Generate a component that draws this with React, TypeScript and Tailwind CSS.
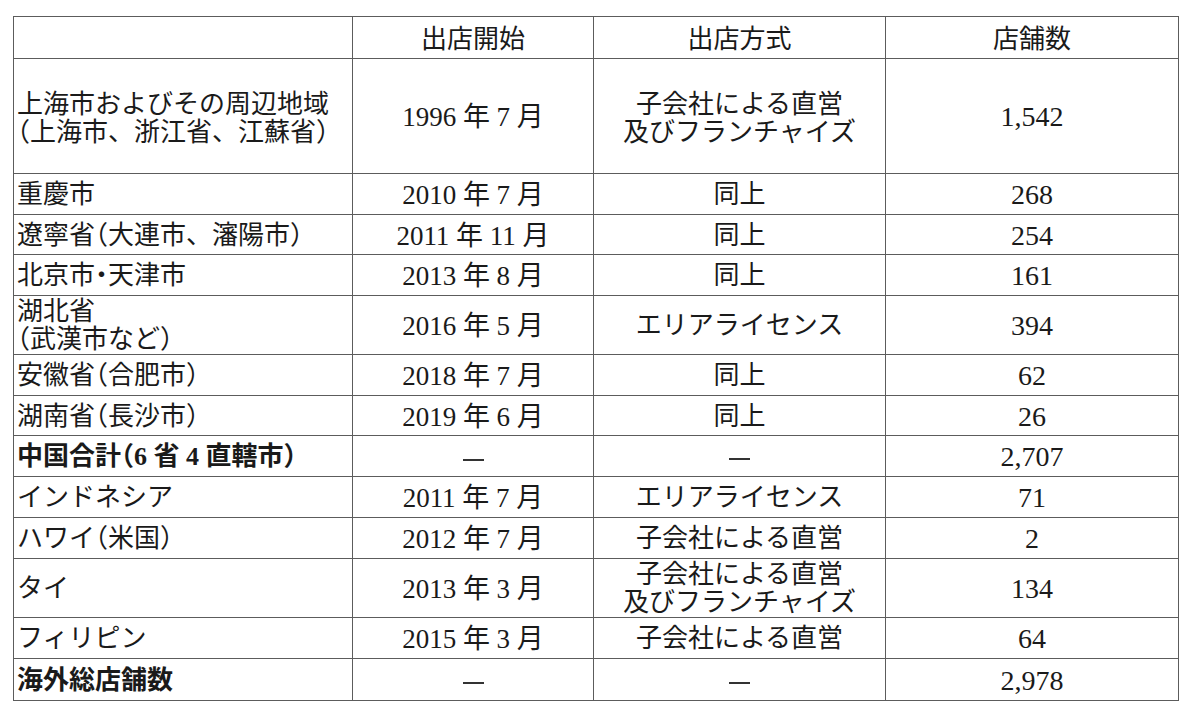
import React from "react";

type Row = {
  region: string[];
  date: string;
  method: string[];
  count: string;
  bold?: boolean;
  h: string;
};

const rows: Row[] = [
  { region: ["上海市およびその周辺地域", "（上海市、浙江省、江蘇省）"], date: "1996 年 7 月", method: ["子会社による直営", "及びフランチャイズ"], count: "1,542", h: "h-[115px]" },
  { region: ["重慶市"], date: "2010 年 7 月", method: ["同上"], count: "268", h: "h-[41px]" },
  { region: ["遼寧省（大連市、瀋陽市）"], date: "2011 年 11 月", method: ["同上"], count: "254", h: "h-[40px]" },
  { region: ["北京市・天津市"], date: "2013 年 8 月", method: ["同上"], count: "161", h: "h-[41px]" },
  { region: ["湖北省", "（武漢市など）"], date: "2016 年 5 月", method: ["エリアライセンス"], count: "394", h: "h-[59px]" },
  { region: ["安徽省（合肥市）"], date: "2018 年 7 月", method: ["同上"], count: "62", h: "h-[41px]" },
  { region: ["湖南省（長沙市）"], date: "2019 年 6 月", method: ["同上"], count: "26", h: "h-[40px]" },
  { region: ["中国合計（6 省 4 直轄市）"], date: "—", method: ["—"], count: "2,707", bold: true, h: "h-[41px]" },
  { region: ["インドネシア"], date: "2011 年 7 月", method: ["エリアライセンス"], count: "71", h: "h-[41px]" },
  { region: ["ハワイ（米国）"], date: "2012 年 7 月", method: ["子会社による直営"], count: "2", h: "h-[41px]" },
  { region: ["タイ"], date: "2013 年 3 月", method: ["子会社による直営", "及びフランチャイズ"], count: "134", h: "h-[58px]" },
  { region: ["フィリピン"], date: "2015 年 3 月", method: ["子会社による直営"], count: "64", h: "h-[41px]" },
  { region: ["海外総店舗数"], date: "—", method: ["—"], count: "2,978", bold: true, h: "h-[42px]" },
];

const font = "[font-family:'Liberation_Serif','Noto_Sans_CJK_JP',serif]";

function Dash() {
  return <span className="inline-block w-[21px] h-[2px] bg-[#333] align-middle" />;
}

function Region({ text }: { text: string }) {
  const parts = text.split(/([（）・])/);
  return (
    <>
      {parts.map((p, k) =>
        p === "（" || p === "）" || p === "・" ? (
          <span key={k} className="[font-feature-settings:'halt']">
            {p}
          </span>
        ) : (
          <React.Fragment key={k}>{p}</React.Fragment>
        )
      )}
    </>
  );
}

const cell = "border border-[#5c5c5c] p-0 pt-[2px] align-middle whitespace-nowrap";

export default function App() {
  return (
    <div className="w-[1194px] h-[720px] bg-white pt-[16px] pl-[13px]">
      <table
        className={`table-fixed border-collapse w-[1165px] text-[26px] leading-[28px] text-[#1a1a1a] ${font}`}
      >
        <colgroup>
          <col className="w-[339px]" />
          <col className="w-[241px]" />
          <col className="w-[292px]" />
          <col className="w-[293px]" />
        </colgroup>
        <thead>
          <tr className="h-[42px]">
            <th className={`${cell} font-normal`}></th>
            <th className={`${cell} font-normal text-center pt-[5px]`}>出店開始</th>
            <th className={`${cell} font-normal text-center pt-[5px]`}>出店方式</th>
            <th className={`${cell} font-normal text-center pt-[5px]`}>店舗数</th>
          </tr>
        </thead>
        <tbody>
          {rows.map((r, i) => (
            <tr key={i} className={r.h}>
              <td className={`${cell} pl-[3px] ${i === 0 ? "pt-[6px]" : ""} ${r.bold ? "font-bold" : ""}`}>
                {r.region.map((t, j) => (
                  <div key={j}>
                    <Region text={t} />
                  </div>
                ))}
              </td>
              <td className={`${cell} text-center text-[27px]`}>
                {r.date === "—" ? <Dash /> : r.date}
              </td>
              <td className={`${cell} text-center ${i === 0 ? "pt-[6px]" : ""}`}>
                {r.method[0] === "—" ? (
                  <Dash />
                ) : (
                  r.method.map((t, j) => <div key={j}>{t}</div>)
                )}
              </td>
              <td className={`${cell} text-center text-[28px]`}>{r.count}</td>
            </tr>
          ))}
        </tbody>
      </table>
    </div>
  );
}
